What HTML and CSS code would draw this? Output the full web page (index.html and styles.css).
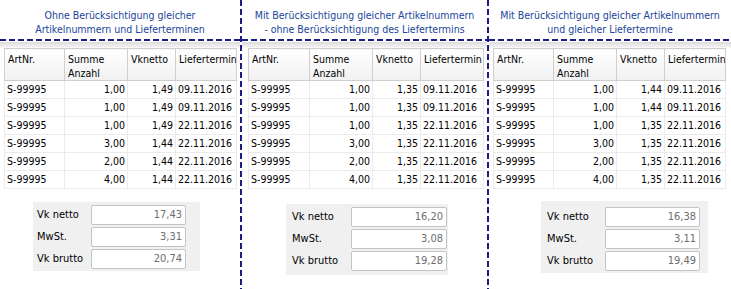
FILE: index.html
```html
<!DOCTYPE html>
<html lang="de">
<head>
<meta charset="utf-8">
<title>Vergleich</title>
<link rel="stylesheet" href="styles.css">
</head>
<body>
<div class="page">
  <section class="panel p1">
    <div class="title">Ohne Berücksichtigung gleicher<br>Artikelnummern und Lieferterminen</div>
    <div class="hline"></div>
    <div class="shade"></div>
    <table class="grid">
      <colgroup><col class="c1"><col class="c2"><col class="c3"><col class="c4"></colgroup>
      <thead><tr><th>ArtNr.</th><th>Summe<br>Anzahl</th><th>Vknetto</th><th>Liefertermin</th></tr></thead>
      <tbody>
        <tr><td>S-99995</td><td class="num">1,00</td><td class="num">1,49</td><td class="date">09.11.2016</td></tr>
        <tr><td>S-99995</td><td class="num">1,00</td><td class="num">1,49</td><td class="date">09.11.2016</td></tr>
        <tr><td>S-99995</td><td class="num">1,00</td><td class="num">1,49</td><td class="date">22.11.2016</td></tr>
        <tr><td>S-99995</td><td class="num">3,00</td><td class="num">1,44</td><td class="date">22.11.2016</td></tr>
        <tr><td>S-99995</td><td class="num">2,00</td><td class="num">1,44</td><td class="date">22.11.2016</td></tr>
        <tr><td>S-99995</td><td class="num">4,00</td><td class="num">1,44</td><td class="date">22.11.2016</td></tr>
      </tbody>
    </table>
    <div class="totals">
      <span class="lbl">Vk netto</span><span class="val">17,43</span>
      <span class="lbl">MwSt.</span><span class="val">3,31</span>
      <span class="lbl">Vk brutto</span><span class="val">20,74</span>
    </div>
  </section>
  <div class="vline"></div>
  <section class="panel p2">
    <div class="title">Mit Berücksichtigung gleicher Artikelnummern<br>- ohne Berücksichtigung des Liefertermins</div>
    <div class="hline"></div>
    <div class="shade"></div>
    <table class="grid">
      <colgroup><col class="c1"><col class="c2"><col class="c3"><col class="c4"></colgroup>
      <thead><tr><th>ArtNr.</th><th>Summe<br>Anzahl</th><th>Vknetto</th><th>Liefertermin</th></tr></thead>
      <tbody>
        <tr><td>S-99995</td><td class="num">1,00</td><td class="num">1,35</td><td class="date">09.11.2016</td></tr>
        <tr><td>S-99995</td><td class="num">1,00</td><td class="num">1,35</td><td class="date">09.11.2016</td></tr>
        <tr><td>S-99995</td><td class="num">1,00</td><td class="num">1,35</td><td class="date">22.11.2016</td></tr>
        <tr><td>S-99995</td><td class="num">3,00</td><td class="num">1,35</td><td class="date">22.11.2016</td></tr>
        <tr><td>S-99995</td><td class="num">2,00</td><td class="num">1,35</td><td class="date">22.11.2016</td></tr>
        <tr><td>S-99995</td><td class="num">4,00</td><td class="num">1,35</td><td class="date">22.11.2016</td></tr>
      </tbody>
    </table>
    <div class="totals">
      <span class="lbl">Vk netto</span><span class="val">16,20</span>
      <span class="lbl">MwSt.</span><span class="val">3,08</span>
      <span class="lbl">Vk brutto</span><span class="val">19,28</span>
    </div>
  </section>
  <div class="vline"></div>
  <section class="panel p3">
    <div class="title">Mit Berücksichtigung gleicher Artikelnummern<br>und gleicher Liefertermine</div>
    <div class="hline"></div>
    <div class="shade"></div>
    <table class="grid">
      <colgroup><col class="c1"><col class="c2"><col class="c3"><col class="c4"></colgroup>
      <thead><tr><th>ArtNr.</th><th>Summe<br>Anzahl</th><th>Vknetto</th><th>Liefertermin</th></tr></thead>
      <tbody>
        <tr><td>S-99995</td><td class="num">1,00</td><td class="num">1,44</td><td class="date">09.11.2016</td></tr>
        <tr><td>S-99995</td><td class="num">1,00</td><td class="num">1,44</td><td class="date">09.11.2016</td></tr>
        <tr><td>S-99995</td><td class="num">1,00</td><td class="num">1,35</td><td class="date">22.11.2016</td></tr>
        <tr><td>S-99995</td><td class="num">3,00</td><td class="num">1,35</td><td class="date">22.11.2016</td></tr>
        <tr><td>S-99995</td><td class="num">2,00</td><td class="num">1,35</td><td class="date">22.11.2016</td></tr>
        <tr><td>S-99995</td><td class="num">4,00</td><td class="num">1,35</td><td class="date">22.11.2016</td></tr>
      </tbody>
    </table>
    <div class="totals">
      <span class="lbl">Vk netto</span><span class="val">16,38</span>
      <span class="lbl">MwSt.</span><span class="val">3,11</span>
      <span class="lbl">Vk brutto</span><span class="val">19,49</span>
    </div>
  </section>
</div>
</body>
</html>
```

FILE: styles.css
```css
html, body {
  margin: 0;
  padding: 0;
  background: #ffffff;
}

body {
  font-family: "DejaVu Sans Condensed", "DejaVu Sans", "Liberation Sans", sans-serif;
  font-size: 10.5px;
  color: #000;
}

.page {
  display: grid;
  grid-template-columns: 240px 2px 245px 2px 242px;
  height: 289px;
  overflow: hidden;
}

.vline {
  background: repeating-linear-gradient(to bottom, #1c1c86 0 6px, transparent 6px 9px);
}

.panel {
  display: flex;
  flex-direction: column;
}

.title {
  height: 39px;
  box-sizing: border-box;
  padding-top: 8px;
  line-height: 14px;
  text-align: center;
  color: #21449a;
}

.hline {
  height: 2px;
  background: repeating-linear-gradient(to right, #1c1c86 0 6px, transparent 6px 9px);
}

.shade {
  height: 6px;
  margin-top: 1px;
  background: linear-gradient(to bottom, #dcdcdc, #eeeeee 70%, #ffffff);
}

.grid {
  border-collapse: collapse;
  table-layout: fixed;
  margin-left: 4px;
  width: 232px;
}

.p2 .grid {
  margin-left: 6px;
  width: 235px;
}

.grid .c1 { width: 60px; }
.grid .c2 { width: 63px; }
.grid .c3 { width: 48px; }
.grid .c4 { width: 61px; }
.p2 .grid .c1 { width: 61px; }
.p2 .grid .c4 { width: 63px; }

.grid th {
  height: 32px;
  box-sizing: border-box;
  padding: 3px 2px 0 3px;
  vertical-align: top;
  text-align: left;
  font-weight: normal;
  line-height: 14px;
  background: linear-gradient(to bottom, #ffffff, #f1f1f1);
  border: 1px solid #cfcfcf;
  white-space: nowrap;
  overflow: hidden;
}

.grid td {
  height: 18px;
  box-sizing: border-box;
  padding: 0 2px;
  line-height: 17px;
  border: 1px solid #ebebeb;
  white-space: nowrap;
  overflow: hidden;
}

.grid td.num {
  text-align: right;
}

.grid td.date {
  padding-left: 2px;
}

.totals {
  display: grid;
  grid-template-columns: 54px 95px;
  row-gap: 2px;
  align-items: center;
  align-self: flex-start;
  background: #f0f0f0;
  margin-top: 13px;
  margin-left: 33px;
  padding: 3px 14px 2px 4px;
  font-size: 11px;
}

.p2 .totals {
  margin-top: 15px;
  margin-left: 44px;
  grid-template-columns: 59px 96px;
  padding: 3px 1px 4px 6px;
}

.p3 .totals {
  margin-top: 12px;
  margin-left: 52px;
  grid-template-columns: 58px 95px;
  padding: 6px 8px 2px 6px;
}

.lbl {
  line-height: 20px;
  color: #000;
}

.val {
  height: 20px;
  box-sizing: border-box;
  border: 1px solid #c4c4c4;
  border-radius: 2px;
  background: #ffffff;
  color: #6e6e6e;
  text-align: right;
  padding-right: 3px;
  line-height: 18px;
}
```
